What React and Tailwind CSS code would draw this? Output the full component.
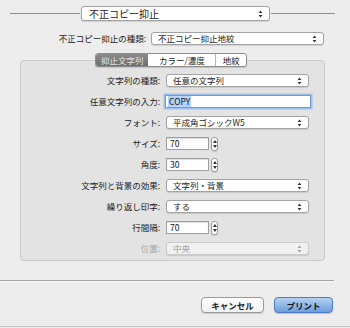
import React from 'react';

const FONT = '"Noto Sans CJK JP", "Noto Sans", sans-serif';

function Arrows({ color = '#333' }) {
  return (
    <svg width="5" height="8" viewBox="0 0 5 8" className="shrink-0">
      <path d="M2.5 0.6L4.4 3.1H0.6Z M2.5 7.4L4.4 4.9H0.6Z" fill={color} />
    </svg>
  );
}

function Popup({ children, className = '', disabled = false, big = false }) {
  return (
    <div
      className={`flex items-center justify-between rounded-[3px] border pr-[6px] shadow-[0_1px_1px_rgba(0,0,0,0.12)] ${
        big ? 'h-[15px] pl-[7px] text-[10px]' : 'h-[13px] pl-[6px] text-[8.5px]'
      } ${disabled ? 'border-[#cbcbcb] bg-[#f1f1f1] text-[#9c9c9c]' : 'border-[#a3a3a3] bg-white text-[#1c1c1c]'} ${className}`}
    >
      <span className="leading-none">{children}</span>
      <Arrows color={disabled ? '#a0a0a0' : '#333'} />
    </div>
  );
}

function Stepper() {
  return (
    <div className="ml-[2px] flex h-[14px] w-[7px] flex-col items-center justify-center gap-[2px] rounded-[3px] border border-[#9d9d9d] bg-white shadow-[0_1px_1px_rgba(0,0,0,0.12)]">
      <svg width="4" height="3" viewBox="0 0 4 3"><path d="M2 0L4 3H0Z" fill="#333" /></svg>
      <svg width="4" height="3" viewBox="0 0 4 3"><path d="M2 3L4 0H0Z" fill="#333" /></svg>
    </div>
  );
}

function NumberField({ value }) {
  return (
    <div className="flex items-center">
      <div className="ml-[1px] flex h-[13px] w-[43px] items-center border border-[#9f9f9f] bg-white pl-[3px] text-[8.5px] leading-none text-[#111] shadow-[inset_0_1px_1px_rgba(0,0,0,0.15)]">
        {value}
      </div>
      <Stepper />
    </div>
  );
}

function Row({ label, disabled = false, children }) {
  return (
    <div className="flex h-[21px] items-center">
      <div className={`w-[139px] text-right text-[8.5px] leading-none ${disabled ? 'text-[#a8a8a8]' : 'text-[#222]'}`}>{label}</div>
      <div className="ml-[5px]">{children}</div>
    </div>
  );
}

export default function App() {
  const tabs = [
    { label: '抑止文字列', w: 'w-[53px]', active: true },
    { label: 'カラー/濃度', w: 'w-[68px]' },
    { label: '地紋', w: 'w-[31px]' },
  ];

  return (
    <div className="relative h-[328px] w-[350px] overflow-hidden bg-[#ededed]" style={{ fontFamily: FONT }}>
      {/* print kind */}
      <div className="mt-[6px] flex h-[15px] items-center pl-[10px]">
        <div className="h-px w-[70px] bg-[#8f8f8f]" />
        <Popup big className="ml-[1px] w-[189px]">不正コピー抑止</Popup>
        <div className="ml-[1px] h-px w-[64px] bg-[#8f8f8f]" />
      </div>

      <div className="mt-[11px] flex h-[13px] items-center">
        <div className="w-[146px] text-right text-[8.5px] leading-none text-[#222]">不正コピー抑止の種類:</div>
        <Popup className="ml-[5px] w-[173px]">不正コピー抑止地紋</Popup>
      </div>

      {/* tabs */}
      <div className="relative z-10 mt-[8px] ml-[95px] flex h-[14px] w-[152px] overflow-hidden rounded-[3px] border border-[#8e8e8e] bg-white shadow-[0_1px_1px_rgba(0,0,0,0.15)]">
        {tabs.map((t, i) => (
          <div
            key={t.label}
            className={`flex ${t.w} items-center justify-center text-[8.5px] leading-none ${
              t.active
                ? 'bg-gradient-to-b from-[#8c8c8c] to-[#6c6c6c] text-[#e6e6e6]'
                : 'text-[#1c1c1c]'
            } ${i === 2 ? 'border-l border-[#b5b5b5]' : ''}`}
          >
            {t.label}
          </div>
        ))}
      </div>

      {/* settings panel */}
      <div className="-mt-[7px] ml-[20px] w-[305px] rounded-[4px] border border-[#c9c9c9] bg-[#e3e3e3] pt-[9px] pb-[1px]">
        <Row label="文字列の種類:">
          <Popup className="ml-[1px] w-[143px]">任意の文字列</Popup>
        </Row>
        <Row label="任意文字列の入力:">
          <div className="flex h-[13px] w-[146px] items-center border border-[#6e9bd6] bg-white pl-[2px] shadow-[0_0_0_1.5px_#9ec2ee]">
            <span className="bg-[#b6d3fb] px-[1px] text-[8.5px] leading-[11px] text-[#111]">COPY</span>
          </div>
        </Row>
        <Row label="フォント:">
          <Popup className="ml-[1px] w-[143px]">平成角ゴシックW5</Popup>
        </Row>
        <Row label="サイズ:">
          <NumberField value="70" />
        </Row>
        <Row label="角度:">
          <NumberField value="30" />
        </Row>
        <Row label="文字列と背景の効果:">
          <Popup className="ml-[1px] w-[143px]">文字列・背景</Popup>
        </Row>
        <Row label="繰り返し印字:">
          <Popup className="ml-[1px] w-[143px]">する</Popup>
        </Row>
        <Row label="行間隔:">
          <NumberField value="70" />
        </Row>
        <Row label="位置:" disabled>
          <Popup disabled className="ml-[1px] w-[143px]">中央</Popup>
        </Row>
      </div>

      {/* separator */}
      <div className="mt-[19px] h-[2px] w-[334px] border-t border-[#a6a6a6] bg-[#f8f8f8]" />

      {/* buttons */}
      <div className="mt-[15px] flex h-[16px] w-[333px] justify-end gap-[10px]">
        <button className="flex w-[63px] items-center justify-center rounded-[4px] border border-[#9a9a9a] bg-gradient-to-b from-white to-[#f1f1f1] text-[8.5px] font-bold leading-none text-[#1c1c1c] shadow-[0_1px_1px_rgba(0,0,0,0.15)]">
          キャンセル
        </button>
        <button className="flex w-[59px] items-center justify-center rounded-[4px] border border-[#4f7cbf] bg-gradient-to-b from-[#b4d1f3] to-[#6e9edb] text-[8.5px] font-bold leading-none text-[#111] shadow-[0_1px_1px_rgba(0,0,0,0.2)]">
          プリント
        </button>
      </div>

      <div className="absolute bottom-[1px] left-0 h-px w-full bg-[#c2c2c2]" />
    </div>
  );
}
